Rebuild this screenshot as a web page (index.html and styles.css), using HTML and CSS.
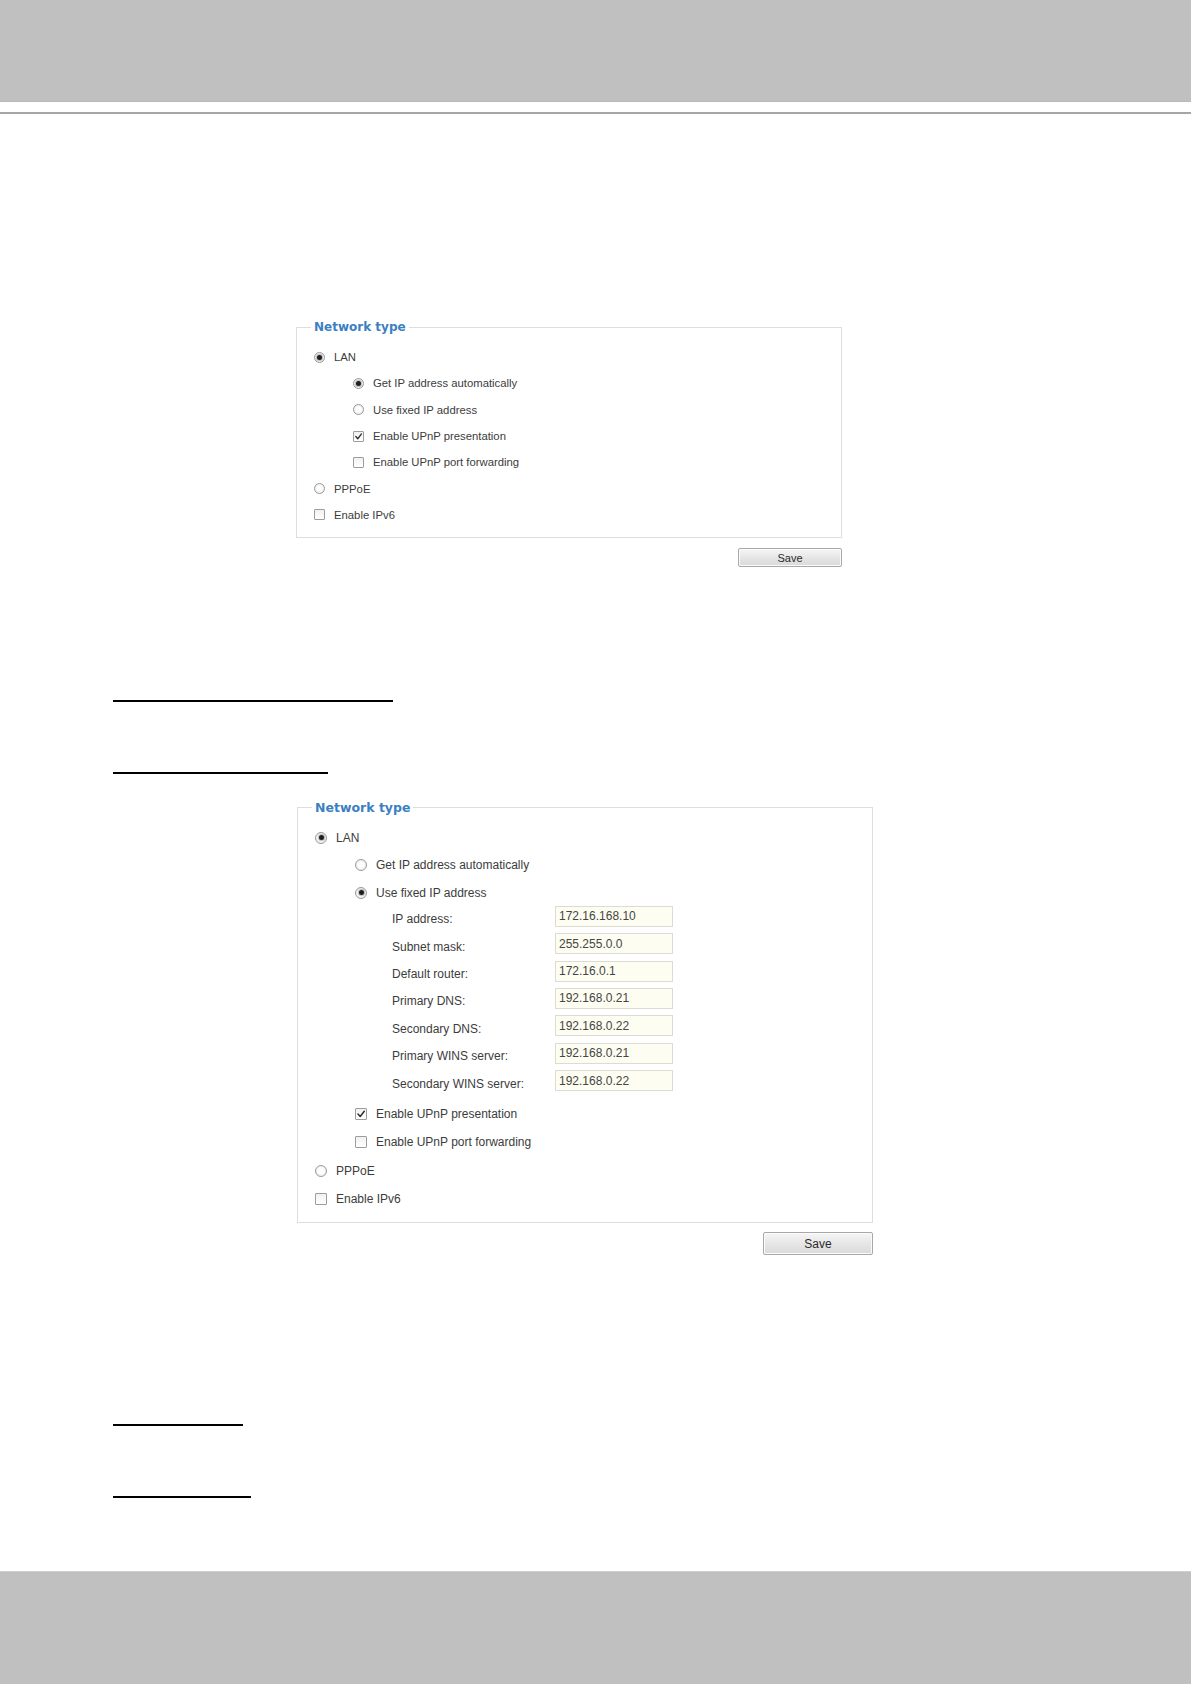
FILE: index.html
```html
<!DOCTYPE html>
<html lang="en">
<head>
<meta charset="utf-8">
<title>Network type</title>
<link rel="stylesheet" href="styles.css">
</head>
<body>
<header class="top-bar"></header>
<div class="rule"></div>

<main class="page">
  <section class="figure fig-a">
    <fieldset class="panel">
      <legend>Network type</legend>
      <div class="row"><span class="radio on"></span><span>LAN</span></div>
      <div class="row sub"><span class="radio on"></span><span>Get IP address automatically</span></div>
      <div class="row sub"><span class="radio"></span><span>Use fixed IP address</span></div>
      <div class="row sub"><span class="check on"><svg viewBox="0 0 10 10"><polyline points="2,5 4.2,7.5 8.3,2.2"/></svg></span><span>Enable UPnP presentation</span></div>
      <div class="row sub"><span class="check"></span><span>Enable UPnP port forwarding</span></div>
      <div class="row"><span class="radio"></span><span>PPPoE</span></div>
      <div class="row"><span class="check"></span><span>Enable IPv6</span></div>
    </fieldset>
    <div class="actions"><button class="btn" type="button">Save</button></div>
  </section>

  <div class="uline u1"></div>
  <div class="uline u2"></div>

  <section class="figure fig-b">
    <fieldset class="panel">
      <legend>Network type</legend>
      <div class="group top">
        <div class="row"><span class="radio on"></span><span>LAN</span></div>
        <div class="row sub"><span class="radio"></span><span>Get IP address automatically</span></div>
        <div class="row sub"><span class="radio on"></span><span>Use fixed IP address</span></div>
      </div>
      <div class="group addr">
        <div class="field"><span class="lbl">IP address:</span><span class="inp">172.16.168.10</span></div>
        <div class="field"><span class="lbl">Subnet mask:</span><span class="inp">255.255.0.0</span></div>
        <div class="field"><span class="lbl">Default router:</span><span class="inp">172.16.0.1</span></div>
        <div class="field"><span class="lbl">Primary DNS:</span><span class="inp">192.168.0.21</span></div>
        <div class="field"><span class="lbl">Secondary DNS:</span><span class="inp">192.168.0.22</span></div>
        <div class="field"><span class="lbl">Primary WINS server:</span><span class="inp">192.168.0.21</span></div>
        <div class="field"><span class="lbl">Secondary WINS server:</span><span class="inp">192.168.0.22</span></div>
      </div>
      <div class="group bottom">
        <div class="row sub"><span class="check on"><svg viewBox="0 0 10 10"><polyline points="2,5 4.2,7.5 8.3,2.2"/></svg></span><span>Enable UPnP presentation</span></div>
        <div class="row sub"><span class="check"></span><span>Enable UPnP port forwarding</span></div>
        <div class="row"><span class="radio"></span><span>PPPoE</span></div>
        <div class="row"><span class="check"></span><span>Enable IPv6</span></div>
      </div>
    </fieldset>
    <div class="actions"><button class="btn" type="button">Save</button></div>
  </section>

  <div class="uline u3"></div>
  <div class="uline u4"></div>
</main>

<footer class="bottom-bar"></footer>
</body>
</html>
```

FILE: styles.css
```css
html, body {
  margin: 0;
  padding: 0;
  background: #ffffff;
}

body {
  font-family: "Liberation Sans", Arial, sans-serif;
  color: #3c3c3c;
  width: 1191px;
  height: 1684px;
  overflow: hidden;
}

.top-bar {
  height: 102px;
  background: #c0c0c0;
  border-bottom: 1px solid #bababa;
  box-sizing: border-box;
}

.rule {
  margin-top: 10px;
  height: 2px;
  background: #a6a6a6;
}

.page {
  display: flex;
  flex-direction: column;
}

/* ---------- figure blocks ---------- */
.figure {
  display: flex;
  flex-direction: column;
}

.fig-a {
  margin: 205px 0 0 296px;
  width: 546px;
  --fs: 11.3px;
  --row: 26.3px;
  --lg: 12px;
  --lh: 16px;
}

.fig-b {
  margin: 24.5px 0 0 297px;
  width: 576px;
  --fs: 12px;
  --row: 27.5px;
  --lg: 12.5px;
  --lh: 17px;
}

.panel {
  margin: 0;
  min-width: 0;
  border: 1px solid #dedede;
  padding: 9px 0 9px 0;
  font-size: var(--fs);
  box-sizing: border-box;
}

.fig-b .panel {
  padding-top: 8.5px;
}

.panel legend {
  margin-left: 14px;
  padding: 0 3px;
  font-family: "DejaVu Sans", Verdana, sans-serif;
  font-weight: bold;
  font-size: var(--lg);
  line-height: var(--lh);
  color: #3b80c3;
}

.row {
  height: var(--row);
  display: flex;
  align-items: center;
  padding-left: 17px;
  white-space: nowrap;
}

.row.sub {
  padding-left: 56px;
}

.fig-b .row.sub {
  padding-left: 57px;
}

.fig-b .group.bottom {
  margin-top: 5.5px;
}

.fig-b .group.bottom .row {
  height: 28.3px;
}

.fig-b .group.addr {
  margin-top: -4px;
  display: flex;
  flex-direction: column;
}

.field {
  height: 27.4px;
  display: flex;
  align-items: center;
  padding-left: 94px;
}

.lbl {
  width: 163px;
  padding-top: 6px;
  white-space: nowrap;
}

.inp {
  width: 118px;
  height: 21px;
  box-sizing: border-box;
  border: 1px solid #dcdcd4;
  background: #fdfdf2;
  padding-left: 3px;
  display: flex;
  align-items: center;
  color: #454545;
  font-size: 12px;
}

/* ---------- radios & checkboxes ---------- */
.radio,
.check {
  flex: none;
  width: 11px;
  height: 11px;
  box-sizing: border-box;
  margin-right: 9px;
  position: relative;
}

.fig-b .radio,
.fig-b .check {
  width: 12px;
  height: 12px;
}

.radio {
  border-radius: 50%;
  border: 1px solid #9a9a9a;
  background: radial-gradient(circle at 50% 50%, #ffffff 30%, #e4e4e4 100%);
}

.radio.on::after {
  content: "";
  position: absolute;
  left: 50%;
  top: 50%;
  width: 5px;
  height: 5px;
  margin: -2.5px 0 0 -2.5px;
  border-radius: 50%;
  background: #1f1f1f;
  box-shadow: 0 0 1px 1px rgba(60, 60, 60, 0.35);
}

.check {
  border: 1px solid #9c9c9c;
  border-radius: 1px;
  background: linear-gradient(#f1f1f1, #ffffff);
}

.check svg {
  position: absolute;
  left: 0;
  top: 0;
  width: 100%;
  height: 100%;
}

.check svg polyline {
  fill: none;
  stroke: #2a2a2a;
  stroke-width: 1.4;
  stroke-linecap: round;
  stroke-linejoin: round;
}

/* ---------- save button ---------- */
.actions {
  display: flex;
  justify-content: flex-end;
  margin-top: 10px;
}

.fig-b .actions {
  margin-top: 9px;
}

.btn {
  margin: 0;
  padding: 0;
  font-family: "Liberation Sans", Arial, sans-serif;
  color: #2a2a2a;
  border: 1px solid #a8a8a8;
  border-radius: 2px;
  background: linear-gradient(#f6f6f6, #e6e6e6 50%, #dadada);
  box-shadow: inset 0 0 0 1px #fbfbfb;
}

.fig-a .btn {
  width: 104px;
  height: 19px;
  font-size: 11px;
}

.fig-b .btn {
  width: 110px;
  height: 23px;
  font-size: 12px;
}

/* ---------- underlines ---------- */
.uline {
  height: 2px;
  background: #000000;
  margin-left: 113px;
}

.u1 { width: 280px; margin-top: 133px; }
.u2 { width: 215px; margin-top: 70px; }
.u3 { width: 130px; margin-top: 169px; }
.u4 { width: 138px; margin-top: 70px; }

.bottom-bar {
  margin-top: 73px;
  height: 113px;
  background: #c0c0c0;
  border-top: 1px solid #cfcfcf;
  box-sizing: border-box;
}
```
